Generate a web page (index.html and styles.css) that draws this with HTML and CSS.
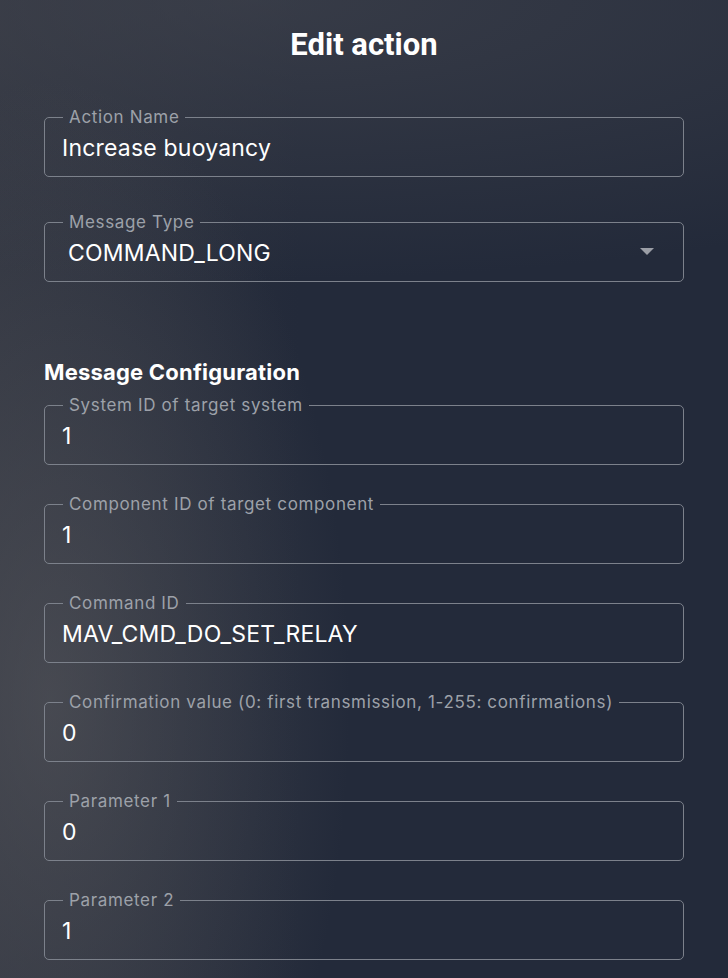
FILE: index.html
```html
<!DOCTYPE html>
<html lang="en">
<head>
<meta charset="utf-8">
<title>Edit action</title>
<link rel="stylesheet" href="styles.css">
</head>
<body>
<main class="dialog">
  <h1 class="title">Edit action</h1>

  <fieldset class="field first">
    <legend class="label">Action Name</legend>
    <div class="value">Increase buoyancy</div>
  </fieldset>

  <fieldset class="field select">
    <legend class="label">Message Type</legend>
    <div class="value">COMMAND_LONG</div>
    <svg class="arrow" width="14" height="8" viewBox="0 0 14 8"><path d="M0 0h14L7 7z" fill="#9b9ea6"/></svg>
  </fieldset>

  <h2 class="section">Message Configuration</h2>

  <fieldset class="field cfg">
    <legend class="label">System ID of target system</legend>
    <div class="value">1</div>
  </fieldset>
  <fieldset class="field cfg">
    <legend class="label">Component ID of target component</legend>
    <div class="value">1</div>
  </fieldset>
  <fieldset class="field cfg">
    <legend class="label">Command ID</legend>
    <div class="value">MAV_CMD_DO_SET_RELAY</div>
  </fieldset>
  <fieldset class="field cfg">
    <legend class="label">Confirmation value (0: first transmission, 1-255: confirmations)</legend>
    <div class="value">0</div>
  </fieldset>
  <fieldset class="field cfg">
    <legend class="label">Parameter 1</legend>
    <div class="value">0</div>
  </fieldset>
  <fieldset class="field cfg">
    <legend class="label">Parameter 2</legend>
    <div class="value">1</div>
  </fieldset>
</main>
</body>
</html>
```

FILE: styles.css
```css
html, body {
  margin: 0;
  padding: 0;
  height: 100%;
  overflow: hidden;
}
body {
  background-color: #232a3a;
  background-image:
    radial-gradient(ellipse 300px 620px at 50px 700px, rgba(92, 92, 96, 0.55), rgba(92, 92, 96, 0) 100%),
    radial-gradient(ellipse 1000px 280px at 250px 0px, rgba(72, 74, 82, 0.55), rgba(72, 74, 82, 0) 100%),
    linear-gradient(90deg, rgba(60, 62, 70, 0.5) 0px, rgba(60, 62, 70, 0) 300px);
  font-family: Inter, "Noto Sans", sans-serif;
  color: #ffffff;
}
.dialog {
  display: flex;
  flex-direction: column;
  padding: 0 44px;
}
.title {
  margin: 28px 0 0;
  font-family: Roboto, "Liberation Sans", sans-serif;
  font-weight: 700;
  font-size: 31px;
  line-height: 34px;
  text-align: center;
  color: #ffffff;
}
.field {
  position: relative;
  margin: 29px 0 0;
  padding: 0 16px 7px 17px;
  border: 1px solid #7c818b;
  border-radius: 5px;
  min-width: 0;
}
.field.first { margin-top: 45px; }
.field.select { margin-top: 35px; padding-left: 23px; }
.label {
  margin-left: 1px;
  padding: 0 6px 0 6px;
  font-size: 17px;
  line-height: 20px;
  letter-spacing: 0.65px;
  color: #9da1a9;
  white-space: nowrap;
}
.select .label { margin-left: -5px; }
.value {
  font-size: 23px;
  line-height: 42px;
  letter-spacing: 0.2px;
  color: #ffffff;
}
.arrow {
  position: absolute;
  right: 29px;
  top: 16px;
}
.section {
  margin: 77px 0 0;
  font-size: 22px;
  line-height: 26px;
  font-weight: 700;
  letter-spacing: 0.2px;
  color: #ffffff;
}
.section + .field { margin-top: 10px; }
```
